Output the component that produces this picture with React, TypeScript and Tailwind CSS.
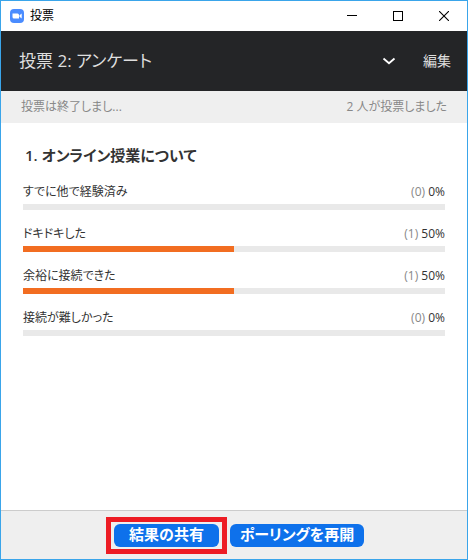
type Answer = {
    label: string;
    count: number;
    percent: number;
};

const answers: Answer[] = [
    { label: "すでに他で経験済み", count: 0, percent: 0 },
    { label: "ドキドキした", count: 1, percent: 50 },
    { label: "余裕に接続できた", count: 1, percent: 50 },
    { label: "接続が難しかった", count: 0, percent: 0 },
];

function ZoomLogo() {
    return (
        <svg width="14" height="14" viewBox="0 0 14 14" aria-hidden="true">
            <rect width="14" height="14" rx="4" fill="#4a8cff" />
            <path d="M2.5 4.5h5a1.5 1.5 0 0 1 1.5 1.5v3.5H4A1.5 1.5 0 0 1 2.5 8z" fill="#fff" />
            <path d="M9.5 6.2l2.2-1.6v4.8L9.5 7.8z" fill="#fff" />
        </svg>
    );
}

function TitleBar() {
    return (
        <div className="flex h-[30px] items-center bg-white pl-[9px] text-black">
            <ZoomLogo />
            <span className="ml-1.5 flex-1 text-xs">投票</span>
            <button type="button" aria-label="最小化" className="flex h-full w-[46px] items-center justify-center">
                <svg width="10" height="10" viewBox="0 0 10 10" shapeRendering="crispEdges">
                    <path d="M0 4.5h10" stroke="currentColor" />
                </svg>
            </button>
            <button type="button" aria-label="最大化" className="flex h-full w-[46px] items-center justify-center">
                <svg width="10" height="10" viewBox="0 0 10 10" shapeRendering="crispEdges">
                    <rect x="0.5" y="0.5" width="9" height="9" fill="none" stroke="currentColor" />
                </svg>
            </button>
            <button type="button" aria-label="閉じる" className="flex h-full w-[46px] items-center justify-center">
                <svg width="10" height="10" viewBox="0 0 10 10">
                    <path d="M0 0l10 10M10 0L0 10" stroke="currentColor" strokeWidth="1.1" />
                </svg>
            </button>
        </div>
    );
}

function AnswerRow({ label, count, percent }: Answer) {
    return (
        <li className="mb-3">
            <div className="flex h-6 items-center justify-between text-xs text-[#333333]">
                <span>{label}</span>
                <span>
                    <span className="text-[#888888]">({count})</span> {percent}%
                </span>
            </div>
            <div className="h-1.5 bg-[#e9e9e9]">
                <div className="h-full bg-[#f26d21]" style={{ width: `${percent}%` }} />
            </div>
        </li>
    );
}

export default function App() {
    return (
        <div className="flex min-h-screen flex-col border border-[#3aa5ea] bg-white font-['Open_Sans','Noto_Sans_CJK_JP',sans-serif] [font-feature-settings:'palt']">
            <TitleBar />

            {/* Poll selector */}
            <header className="flex h-[60px] items-center bg-[#242527] pr-4 pl-[18px] text-[#dedede]">
                <h1 className="flex-1 text-[17px]">投票 2: アンケート</h1>
                <button type="button" aria-label="投票を選択" className="mr-[27px]">
                    <svg width="14" height="8" viewBox="0 0 14 8" fill="none">
                        <path d="M1.5 1.5L7 6.2l5.5-4.7" stroke="#fff" strokeWidth="1.8" />
                    </svg>
                </button>
                <button type="button" className="text-sm">編集</button>
            </header>

            {/* Status */}
            <div className="flex h-8 items-center justify-between bg-[#efefef] px-5 text-xs text-[#888888]">
                <span>投票は終了しまし...</span>
                <span>2 人が投票しました</span>
            </div>

            {/* Results */}
            <main className="flex-1 px-[22px] pt-5">
                <h2 className="mb-[13px] pl-0.5 text-[15px] leading-6 font-semibold text-[#333333]">
                    1. オンライン授業について
                </h2>
                <ul>
                    {answers.map((answer) => (
                        <AnswerRow key={answer.label} {...answer} />
                    ))}
                </ul>
            </main>

            {/* Actions */}
            <footer className="flex h-[49px] items-center justify-center gap-[11px] border-t border-[#cccccc] bg-[#efefef] pl-[10px] text-[15px] font-semibold text-white">
                <div className="relative">
                    <button type="button" className="block h-[23px] w-[105px] rounded-md bg-[#0e71eb] pb-0.5 leading-5">
                        結果の共有
                    </button>
                    <div className="pointer-events-none absolute -inset-x-2 -inset-y-[7px] border-[5px] border-[#ed1c24]" />
                </div>
                <button type="button" className="h-[23px] w-[134px] rounded-md bg-[#0e71eb] pb-0.5 leading-5 whitespace-nowrap">
                    ポーリングを再開
                </button>
            </footer>
        </div>
    );
}
